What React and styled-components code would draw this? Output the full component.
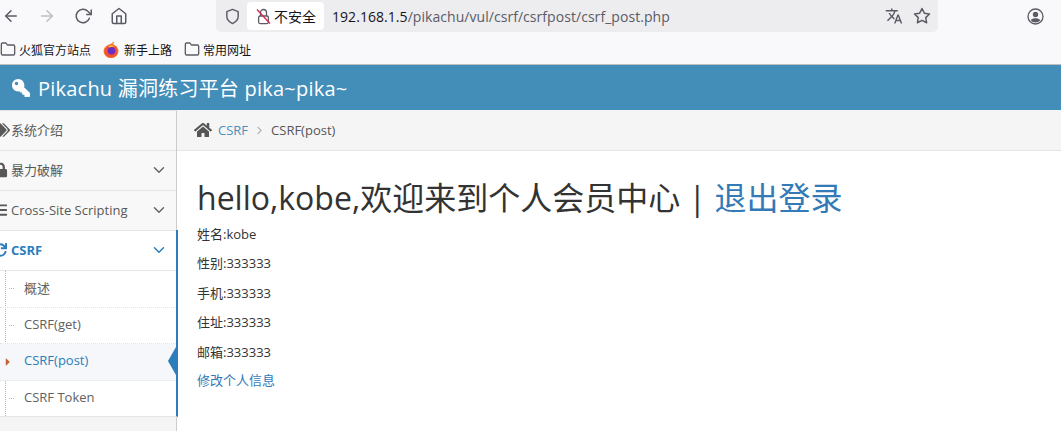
import React from 'react'
import styled, {createGlobalStyle} from 'styled-components'
import {FaHome, FaKey, FaLock, FaTags, FaListUl, FaSync, FaCaretRight} from 'react-icons/fa'
import {FiArrowLeft, FiArrowRight, FiRotateCw, FiHome, FiShield, FiFolder, FiStar, FiChevronDown, FiChevronRight} from 'react-icons/fi'
import {MdTranslate} from 'react-icons/md'

const Global = createGlobalStyle`
  html, body { margin: 0; padding: 0; background: #fff; }
  body {
    width: 1061px;
    height: 431px;
    overflow: hidden;
    font-family: "Open Sans", "Noto Sans CJK SC", sans-serif;
    font-size: 13px;
    color: #393939;
  }
`

const Chrome = styled.div`
  height: 64px;
  background: #f9f9fb;
  border-bottom: 1px solid #bfbfc3;
  display: flex;
  flex-direction: column;
`

const Toolbar = styled.div`
  height: 32px;
  display: flex;
  align-items: center;
`

const NavIcons = styled.div`
  width: 216px;
  display: flex;
  align-items: center;
  gap: 16px;
  padding-left: 1px;
  box-sizing: border-box;
  font-size: 18px;
`

const NavIcon = styled.span`
  width: 20px;
  display: flex;
  justify-content: center;
  color: ${p => p.$off ? '#bdbdc3' : '#5b5b66'};
`

const UrlBar = styled.div`
  width: 722px;
  height: 32px;
  background: #ededf0;
  border-radius: 0 0 5px 5px;
  display: flex;
  align-items: center;
  padding-left: 8px;
  box-sizing: border-box;
  color: #5b5b66;
`

const Insecure = styled.div`
  margin-left: 6px;
  width: 77px;
  height: 28px;
  background: #fff;
  border-radius: 4px;
  display: flex;
  align-items: center;
  padding-left: 9px;
  gap: 3px;
  box-sizing: border-box;
  color: #15141a;
  font-size: 14px;
  font-family: "Noto Sans CJK SC", sans-serif;
`

const Url = styled.div`
  margin-left: 8px;
  flex: 1;
  font-family: "Open Sans", sans-serif;
  font-size: 14px;
  letter-spacing: 0.05px;
  color: #5b5b66;
  b { font-weight: 400; color: #15141a; }
`

const UrlActions = styled.div`
  display: flex;
  align-items: center;
  gap: 10px;
  padding-right: 7px;
  font-size: 18px;
`

const Account = styled.div`
  margin-left: 89px;
  display: flex;
`

const Bookmarks = styled.div`
  height: 32px;
  display: flex;
  align-items: center;
  padding-top: 2px;
  box-sizing: border-box;
  font-size: 12px;
  color: #15141a;
  font-family: "Noto Sans CJK SC", sans-serif;
`

const Bookmark = styled.div`
  display: flex;
  align-items: center;
  gap: ${p => p.$gap || 3}px;
  margin-right: 12px;
  svg { flex: none; }
`

const FolderIcon = styled(FiFolder)`
  font-size: 16px;
  color: #5b5b66;
`

const Navbar = styled.div`
  height: 45px;
  background: #438eb9;
  color: #fff;
  display: flex;
  align-items: center;
  padding-left: 12px;
  gap: 8px;
  font-size: 20px;
  letter-spacing: 0.22px;
`

const KeyIcon = styled(FaKey)`
  transform: scaleX(-1);
  font-size: 18px;
`

const Main = styled.div`
  display: flex;
  height: 321px;
`

const Sidebar = styled.div`
  width: 177px;
  flex: none;
  background: #f5f5f5;
  border-right: 1px solid #ccc;
  border-top: 1px solid #e5e5e5;
  box-sizing: border-box;
`

const MenuItem = styled.div`
  height: 40px;
  box-sizing: border-box;
  padding: 0 8px 2px 11px;
  display: flex;
  align-items: center;
  position: relative;
  background: ${p => p.$open ? '#fff' : '#f8f8f8'};
  color: ${p => p.$open ? '#2b7dbc' : '#585858'};
  font-weight: ${p => p.$open ? 700 : 400};
  border-bottom: 1px solid #e5e5e5;
  &::after {
    content: "";
    display: ${p => p.$open ? 'block' : 'none'};
    position: absolute;
    right: -2px;
    top: -1px;
    bottom: -1px;
    width: 2px;
    background: #2b7dbc;
  }
`

const MenuIcon = styled.span`
  position: absolute;
  left: ${p => p.$left}px;
  top: 50%;
  transform: translateY(-50%);
  margin-top: -1px;
  display: flex;
  font-size: ${p => p.$size}px;
`

const Chevron = styled.span`
  margin-left: auto;
  display: flex;
  font-size: 18px;
  color: ${p => p.$open ? '#2b7dbc' : '#666'};
`

const SubMenu = styled.div`
  background: #fff;
  margin-right: -2px;
  border-right: 2px solid #2b7dbc;
  border-bottom: 1px solid #e5e5e5;
  height: 146px;
  box-sizing: border-box;
  position: relative;
  display: flex;
  flex-direction: column;
  &::before {
    content: "";
    position: absolute;
    left: 5px;
    top: 0;
    bottom: 0;
    border-left: 1px dotted #9dbdd6;
  }
`

const SubItem = styled.div`
  flex: 1;
  box-sizing: border-box;
  padding: 0 0 3px 24px;
  display: flex;
  align-items: center;
  position: relative;
  color: ${p => p.$active ? '#2b7dbc' : '#616161'};
  background: ${p => p.$active ? '#f5f7fa' : 'transparent'};
  border-bottom: ${p => p.$last ? 'none' : '1px dotted #e4e4e4'};
  &::before {
    content: "";
    display: ${p => p.$active ? 'none' : 'block'};
    position: absolute;
    left: 9px;
    top: 17px;
    width: 5px;
    border-top: 1px dotted #9dbdd6;
  }
`

const ActiveCaret = styled.span`
  position: absolute;
  left: 2px;
  top: 12px;
  display: flex;
  color: #c86139;
  font-size: 12px;
`

const ActiveArrow = styled.span`
  position: absolute;
  right: 0;
  top: 3px;
  width: 0;
  height: 0;
  border-top: 14px solid transparent;
  border-bottom: 14px solid transparent;
  border-right: 8px solid #2b7dbc;
`

const Content = styled.div`
  flex: 1;
  background: #fff;
`

const Breadcrumbs = styled.div`
  height: 41px;
  box-sizing: border-box;
  background: #f5f5f5;
  border-bottom: 1px solid #e5e5e5;
  display: flex;
  align-items: center;
  padding-left: 17px;
  color: #555;
`

const HomeIcon = styled.span`
  display: flex;
  font-size: 18px;
  margin-right: 6px;
  color: #555;
`

const Crumb = styled.a`
  color: #4c8fbd;
`

const CrumbSep = styled.span`
  display: flex;
  margin: 0 5px;
  color: #b2b6bf;
  font-size: 13px;
`

const Page = styled.div`
  padding: 26px 20px 0;
`

const Title = styled.h1`
  margin: 0 0 0.75px;
  font-size: 32px;
  font-weight: 400;
  line-height: 42px;
  color: #333;
`

const TitleLink = styled.a`
  color: #337ab7;
`

const Line = styled.p`
  margin: 0;
  height: 29.5px;
  line-height: 20px;
  padding-top: 4px;
  box-sizing: border-box;
  color: #333;
  font-size: 13px;
`

const EditLink = styled.a`
  display: block;
  margin-top: 2.5px;
  color: #337ab7;
`

const subItems = ['概述', 'CSRF(get)', 'CSRF(post)', 'CSRF Token']
const lines = ['姓名:kobe', '性别:333333', '手机:333333', '住址:333333', '邮箱:333333']

function BrokenLock () {
  return (
    <svg width="15" height="17" viewBox="0 0 15 17" fill="none">
      <path d="M4.5 8V4.5a3 3 0 0 1 6 0V8" stroke="#5b5b66" strokeWidth="1.3" />
      <rect x="2.6" y="8" width="9.8" height="7.6" rx="1.5" stroke="#5b5b66" strokeWidth="1.3" />
      <path d="M1 1.5 14 15.5" stroke="#e22850" strokeWidth="1.4" />
    </svg>
  )
}

function FoxLogo () {
  return (
    <svg width="16" height="17" viewBox="0 0 16 17">
      <path d="M11 0.5c0.5 2-0.5 3-1 3.5C12 4 15.5 6 15.5 10a7.5 7 0 0 1-15 0.5c0-2 .7-3.5 1.5-4.500 0 1 .5 1.500 1 2 .5-3 4-4 7.500-7.500z" fill="#ff9a2e" />
      <circle cx="8" cy="10" r="6.800" fill="#f0443a" opacity="0.85" />
      <circle cx="8.500" cy="9.800" r="3.800" fill="#6a2cc4" />
      <path d="M5 5c2-1 5-1 7 1-2-.5-4-.5-5 .5z" fill="#ffc12e" />
    </svg>
  )
}

function AccountIcon () {
  return (
    <svg width="17" height="17" viewBox="0 0 17 17" fill="none">
      <circle cx="8.500" cy="8.500" r="7.500" stroke="#5b5b66" strokeWidth="1.300" />
      <circle cx="8.500" cy="6.500" r="2.700" fill="#5b5b66" />
      <path d="M3.700 12.200c1-1.400 2.800-1.900 4.800-1.900s3.800.5 4.800 1.900a6.300 6.300 0 0 1-9.600 0z" fill="#5b5b66" />
    </svg>
  )
}

export default function App () {
  return (
    <>
      <Global />
      <Chrome>
        <Toolbar>
          <NavIcons>
            <NavIcon><FiArrowLeft /></NavIcon>
            <NavIcon $off><FiArrowRight /></NavIcon>
            <NavIcon><FiRotateCw /></NavIcon>
            <NavIcon><FiHome /></NavIcon>
          </NavIcons>
          <UrlBar>
            <FiShield size={17} />
            <Insecure><BrokenLock />不安全</Insecure>
            <Url><b>192.168.1.5</b>/pikachu/vul/csrf/csrfpost/csrf_post.php</Url>
            <UrlActions><MdTranslate /><FiStar /></UrlActions>
          </UrlBar>
          <Account><AccountIcon /></Account>
        </Toolbar>
        <Bookmarks>
          <Bookmark><FolderIcon />火狐官方站点</Bookmark>
          <Bookmark $gap={5}><FoxLogo />新手上路</Bookmark>
          <Bookmark><FolderIcon />常用网址</Bookmark>
        </Bookmarks>
      </Chrome>
      <Navbar><KeyIcon />Pikachu 漏洞练习平台 pika~pika~</Navbar>
      <Main>
        <Sidebar>
          <MenuItem><MenuIcon $left={-7} $size={17}><FaTags /></MenuIcon>系统介绍</MenuItem>
          <MenuItem><MenuIcon $left={-7} $size={15}><FaLock /></MenuIcon>暴力破解<Chevron><FiChevronDown /></Chevron></MenuItem>
          <MenuItem><MenuIcon $left={-8} $size={15}><FaListUl /></MenuIcon>Cross-Site Scripting<Chevron><FiChevronDown /></Chevron></MenuItem>
          <MenuItem $open><MenuIcon $left={-7} $size={14}><FaSync /></MenuIcon>CSRF<Chevron $open><FiChevronDown /></Chevron></MenuItem>
          <SubMenu>
            {subItems.map((item, i) => (
              <SubItem key={item} $active={i === 2} $last={i === 3}>
                {i === 2 ? <ActiveCaret><FaCaretRight /></ActiveCaret> : null}
                {item}
                {i === 2 ? <ActiveArrow /> : null}
              </SubItem>
            ))}
          </SubMenu>
        </Sidebar>
        <Content>
          <Breadcrumbs>
            <HomeIcon><FaHome /></HomeIcon>
            <Crumb>CSRF</Crumb>
            <CrumbSep><FiChevronRight /></CrumbSep>
            CSRF(post)
          </Breadcrumbs>
          <Page>
            <Title>hello,kobe,欢迎来到个人会员中心 | <TitleLink>退出登录</TitleLink></Title>
            {lines.map(line => <Line key={line}>{line}</Line>)}
            <EditLink>修改个人信息</EditLink>
          </Page>
        </Content>
      </Main>
    </>
  )
}
